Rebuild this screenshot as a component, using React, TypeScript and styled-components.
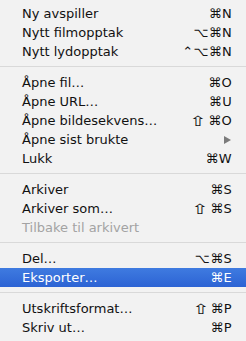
import React from 'react'
import styled, { createGlobalStyle } from 'styled-components'

const GlobalStyle = createGlobalStyle`
    html, body {
        margin: 0;
        padding: 0;
        background: #f2f2f2;
    }
`

type Item =
    | { kind: 'item'; label: string; shortcut?: string; disabled?: boolean; submenu?: boolean; active?: boolean }
    | { kind: 'sep' }

const items: Item[] = [
    { kind: 'item', label: 'Ny avspiller', shortcut: '⌘N' },
    { kind: 'item', label: 'Nytt filmopptak', shortcut: '⌥⌘N' },
    { kind: 'item', label: 'Nytt lydopptak', shortcut: '⌃⌥⌘N' },
    { kind: 'sep' },
    { kind: 'item', label: 'Åpne fil…', shortcut: '⌘O' },
    { kind: 'item', label: 'Åpne URL…', shortcut: '⌘U' },
    { kind: 'item', label: 'Åpne bildesekvens…', shortcut: '⇧⌘O' },
    { kind: 'item', label: 'Åpne sist brukte', submenu: true },
    { kind: 'item', label: 'Lukk', shortcut: '⌘W' },
    { kind: 'sep' },
    { kind: 'item', label: 'Arkiver', shortcut: '⌘S' },
    { kind: 'item', label: 'Arkiver som…', shortcut: '⇧⌘S' },
    { kind: 'item', label: 'Tilbake til arkivert', disabled: true },
    { kind: 'sep' },
    { kind: 'item', label: 'Del…', shortcut: '⌥⌘S' },
    { kind: 'item', label: 'Eksporter…', shortcut: '⌘E', active: true },
    { kind: 'sep' },
    { kind: 'item', label: 'Utskriftsformat…', shortcut: '⇧⌘P' },
    { kind: 'item', label: 'Skriv ut…', shortcut: '⌘P' },
]

// shift glyph is narrow in DejaVu, so it gets stretched to look like the mac one
const renderShortcut = (s: string) =>
    s.split('').map((ch, i) => (ch === '⇧' ? <Shift key={i}>{ch}</Shift> : <span key={i}>{ch}</span>))

export default function App() {
    return (
        <>
            <GlobalStyle />
            <Menu>
                {items.map((it, i) =>
                    it.kind === 'sep' ? (
                        <Separator key={i} />
                    ) : (
                        <Row key={i} $active={it.active} $disabled={it.disabled}>
                            <Label>{it.label}</Label>
                            {it.shortcut && <Shortcut>{renderShortcut(it.shortcut)}</Shortcut>}
                            {it.submenu && <Arrow />}
                        </Row>
                    )
                )}
            </Menu>
        </>
    )
}

const Menu = styled.div`
    width: 246px;
    height: 341px;
    box-sizing: border-box;
    padding: 4px 0;
    background: #f2f2f2;
    font-family: "DejaVu Sans", sans-serif;
    font-size: 13px;
    display: flex;
    flex-direction: column;
`

const Row = styled.div<{ $active?: boolean; $disabled?: boolean }>`
    height: 19px;
    display: flex;
    align-items: center;
    justify-content: space-between;
    padding: 0 14px 0 22px;
    color: ${p => (p.$active ? '#ffffff' : p.$disabled ? '#a3a3a3' : '#111111')};
    background: ${p => (p.$active ? 'linear-gradient(#3f7be0, #2c63d4)' : 'transparent')};
`

const Label = styled.span`
    white-space: nowrap;
`

const Shortcut = styled.span`
    white-space: nowrap;
    display: flex;
    align-items: center;
    letter-spacing: 0.3px;
`

const Shift = styled.span`
    display: inline-block;
    font-size: 14px;
    line-height: 1;
    transform: scaleX(1.45);
    margin: 0 4px 0 2px;
`

const Arrow = styled.span`
    width: 0;
    height: 0;
    margin-right: 1px;
    border-top: 4.5px solid transparent;
    border-bottom: 4.5px solid transparent;
    border-left: 7px solid #7b7b7b;
`

const Separator = styled.div`
    height: 12px;
    display: flex;
    align-items: center;

    &:before {
        content: "";
        display: block;
        width: 100%;
        height: 1px;
        margin-top: -1px;
        background: #d9d9d9;
    }
`
